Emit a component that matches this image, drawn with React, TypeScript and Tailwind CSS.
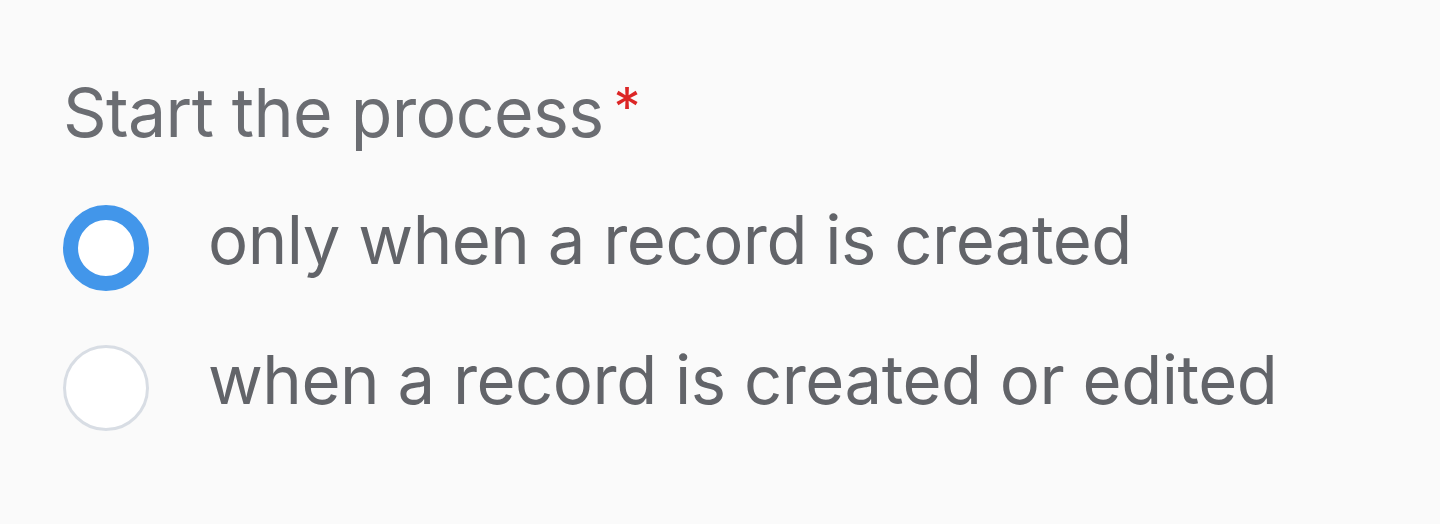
import React from "react";

export default function App() {
  return (
    <div className="w-[1440px] h-[524px] bg-[#fafafa] pl-[63px] pt-[78px]" style={{ fontFamily: "Inter, 'Helvetica Neue', Arial, sans-serif" }}>
      <div className="flex items-start text-[68px] leading-[68px] text-[#6b6d72] tracking-[-0.6px]">
        <span>Start the process</span>
        <span className="text-[#dc2626] text-[54px] leading-[54px] ml-[10px] mt-[2px]">*</span>
      </div>
      <div className="mt-[59px] flex flex-col gap-[54px]">
        <label className="flex items-center h-[86px]">
          <span className="w-[86px] h-[86px] rounded-full border-[15px] border-[#4296ea] bg-white shrink-0" />
          <span className="ml-[59px] mb-[16px] text-[67px] leading-[68px] text-[#626469] tracking-[-0.5px]">only when a record is created</span>
        </label>
        <label className="flex items-center h-[86px]">
          <span className="w-[86px] h-[86px] rounded-full border-[3px] border-[#d8dde4] bg-white shrink-0" />
          <span className="ml-[59px] mb-[16px] text-[67px] leading-[68px] text-[#626469] tracking-[-0.5px]">when a record is created or edited</span>
        </label>
      </div>
    </div>
  );
}
